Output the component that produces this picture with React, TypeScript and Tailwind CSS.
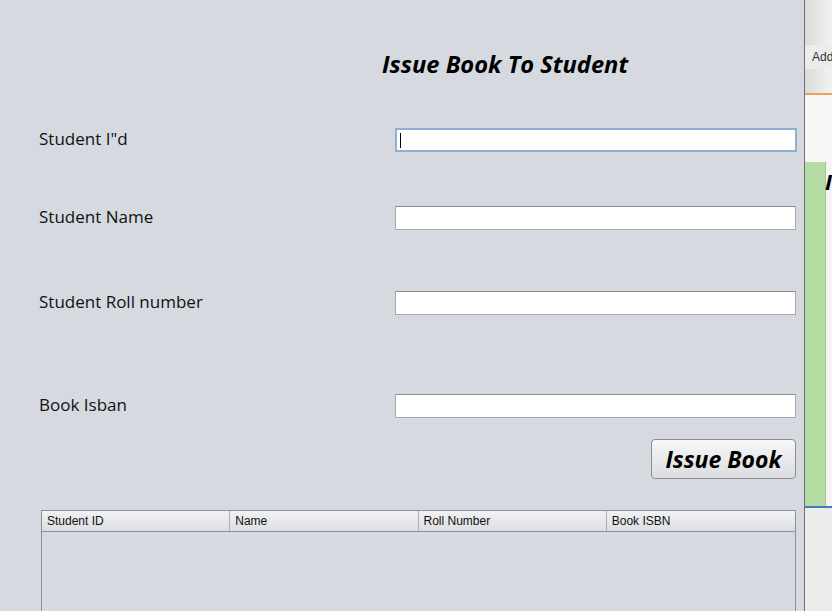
import React from 'react';

const labelFont = { fontFamily: '"Open Sans", "Noto Sans", sans-serif' };

const Field: React.FC<{ label: string; focused?: boolean; className?: string }> = ({ label, focused, className }) => (
  <div className={`flex h-[24px] items-center ${className ?? ''}`}>
    <span className="w-[395px] pb-[2px] pl-[39px] text-[17px] leading-[22px] text-[#111]" style={labelFont}>
      {label}
    </span>
    {focused ? (
      <div className="flex h-[24px] w-[402px] items-center border-2 border-[#8fb0d3] bg-white pl-[3px]">
        <span className="h-[15px] w-px bg-black" />
      </div>
    ) : (
      <div className="h-[24px] w-[401px] border border-[#a7a9ad] border-t-[#8a8c90] bg-white" />
    )}
  </div>
);

const columns = ['Student ID', 'Name', 'Roll Number', 'Book ISBN'];

export default function App() {
  return (
    <div className="flex h-[611px] w-[832px] overflow-hidden bg-[#d6d9e0]">
      <div className="flex w-[804px] flex-col">
        <h1 className="mt-[48px] pl-[382px] text-[23.7px] font-bold italic leading-[32px] text-black" style={labelFont}>
          Issue Book To Student
        </h1>
        <Field label={'Student I"d'} focused className="mt-[48px]" />
        <Field label="Student Name" className="mt-[54px]" />
        <Field label="Student Roll number" className="mt-[61px]" />
        <Field label="Book Isban" className="mt-[79px]" />
        <div className="mt-[21px] flex justify-end pr-[8px]">
          <button
            className="h-[40px] w-[145px] rounded-[4px] border border-[#8c8e93] bg-gradient-to-b from-[#f7f7f8] to-[#dcdde0] text-[23px] font-bold italic text-black"
            style={labelFont}
          >
            Issue Book
          </button>
        </div>
        <div className="ml-[41px] mt-[31px] flex w-[755px] flex-1 flex-col border-x border-t border-[#8d9096]">
          <div
            className="grid h-[21px] grid-cols-4 border-b border-[#8d9096] bg-gradient-to-b from-[#f1f2f4] to-[#dcdee2] text-[12px] text-[#111]"
            style={{ fontFamily: '"Liberation Sans", Arial, sans-serif' }}
          >
            {columns.map((c, i) => (
              <div key={c} className={`flex items-center pl-[5px] ${i < 3 ? 'border-r border-[#a9acb2]' : ''}`}>
                {c}
              </div>
            ))}
          </div>
          <div className="flex-1 bg-[#d6d9e0]" />
        </div>
      </div>
      <div className="w-px bg-[#6b6e73]" />
      <div className="relative flex-1 bg-gradient-to-r from-[#dcdcdc] to-[#f2f2f2]">
        <div
          className="absolute left-0 right-0 top-[45px] flex h-[24px] items-center bg-[#ececec] pl-[7px] text-[12px] text-[#333]"
          style={{ fontFamily: '"Liberation Sans", sans-serif' }}
        >
          Add
        </div>
        <div className="absolute left-0 right-0 top-[93px] h-[2px] bg-[#f0a050]" />
        <div className="absolute left-0 right-0 top-[95px] h-[410px] bg-[#f6f6f6]" />
        <div className="absolute left-0 top-[162px] h-[344px] w-[21px] border-r border-[#9fc890] bg-[#b4dca4]" />
        <div className="absolute left-[20px] top-[165px] text-[22px] font-bold italic text-black" style={labelFont}>
          I
        </div>
        <div className="absolute left-0 right-0 top-[506px] h-[2px] bg-[#4a78b8]" />
        <div className="absolute bottom-0 left-0 right-0 top-[508px] bg-[#ececec]" />
      </div>
    </div>
  );
}
